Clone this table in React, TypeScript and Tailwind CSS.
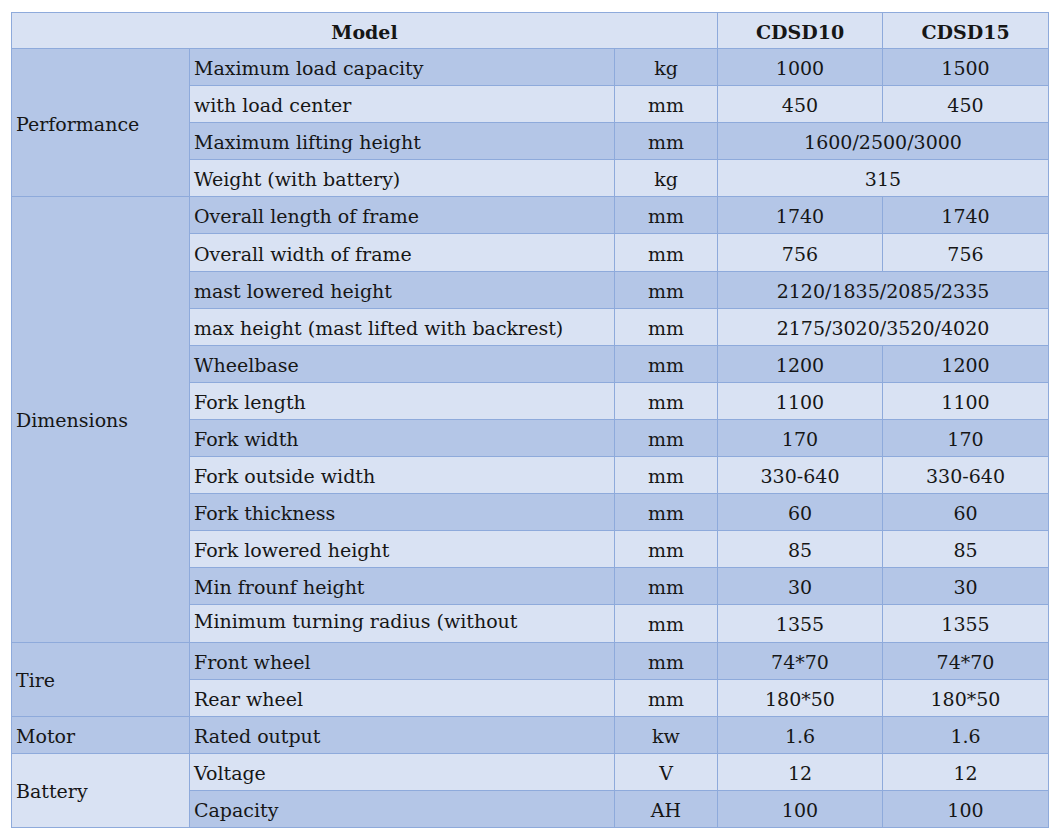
import React from "react";

type Row = { p: string; u: string; a: string; b?: string; cat?: string; span?: number };

const rows: Row[] = [
  { cat: "Performance", span: 4, p: "Maximum load capacity", u: "kg", a: "1000", b: "1500" },
  { p: "with load center", u: "mm", a: "450", b: "450" },
  { p: "Maximum lifting height", u: "mm", a: "1600/2500/3000" },
  { p: "Weight (with battery)", u: "kg", a: "315" },
  { cat: "Dimensions", span: 12, p: "Overall length of frame", u: "mm", a: "1740", b: "1740" },
  { p: "Overall width of frame", u: "mm", a: "756", b: "756" },
  { p: "mast lowered height", u: "mm", a: "2120/1835/2085/2335" },
  { p: "max height (mast lifted with backrest)", u: "mm", a: "2175/3020/3520/4020" },
  { p: "Wheelbase", u: "mm", a: "1200", b: "1200" },
  { p: "Fork length", u: "mm", a: "1100", b: "1100" },
  { p: "Fork width", u: "mm", a: "170", b: "170" },
  { p: "Fork outside width", u: "mm", a: "330-640", b: "330-640" },
  { p: "Fork thickness", u: "mm", a: "60", b: "60" },
  { p: "Fork lowered height", u: "mm", a: "85", b: "85" },
  { p: "Min frounf height", u: "mm", a: "30", b: "30" },
  { p: "Minimum turning radius (without", u: "mm", a: "1355", b: "1355" },
  { cat: "Tire", span: 2, p: "Front wheel", u: "mm", a: "74*70", b: "74*70" },
  { p: "Rear wheel", u: "mm", a: "180*50", b: "180*50" },
  { cat: "Motor", span: 1, p: "Rated output", u: "kw", a: "1.6", b: "1.6" },
  { cat: "Battery", span: 2, p: "Voltage", u: "V", a: "12", b: "12" },
  { p: "Capacity", u: "AH", a: "100", b: "100" },
];

const cell = "border border-[#8eaadb] pt-[3px]";

export default function App() {
  return (
    <div className="w-[1059px] h-[838px] bg-white pt-[12px] pl-[11px]">
      <table
        className="border-collapse text-[#161616] text-[19px] leading-none"
        style={{ fontFamily: '"DejaVu Serif", "Liberation Serif", serif' }}
      >
        <colgroup>
          <col className="w-[178px]" />
          <col className="w-[425px]" />
          <col className="w-[103px]" />
          <col className="w-[165px]" />
          <col className="w-[166px]" />
        </colgroup>
        <tbody>
          <tr className="h-[36px] bg-[#d9e2f3]">
            <td colSpan={3} className={cell + " text-center font-bold"}>Model</td>
            <td className={cell + " text-center font-bold"}>CDSD10</td>
            <td className={cell + " text-center font-bold"}>CDSD15</td>
          </tr>
          {rows.map((r, i) => {
            const dark = i % 2 === 0;
            const bg = dark ? "bg-[#b4c6e7]" : "bg-[#d9e2f3]";
            return (
              <tr key={i} className={"h-[37.1px] " + bg}>
                {r.cat && (
                  <td rowSpan={r.span} className={cell + " pl-[4px] align-middle " + bg}>
                    {r.cat}
                  </td>
                )}
                <td className={cell + " pl-[4px] " + (r.p.startsWith("Minimum turning") ? "align-top pt-[7px]" : "")}>
                  {r.p}
                </td>
                <td className={cell + " text-center"}>{r.u}</td>
                {r.b ? (
                  <>
                    <td className={cell + " text-center"}>{r.a}</td>
                    <td className={cell + " text-center"}>{r.b}</td>
                  </>
                ) : (
                  <td colSpan={2} className={cell + " text-center"}>{r.a}</td>
                )}
              </tr>
            );
          })}
        </tbody>
      </table>
    </div>
  );
}
